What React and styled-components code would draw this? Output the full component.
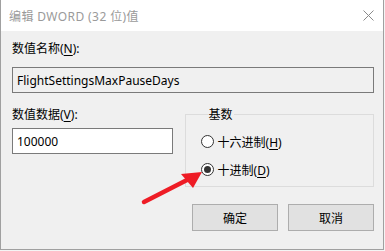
import React from "react";
import styled, { createGlobalStyle } from "styled-components";

const Global = createGlobalStyle`
  html, body { margin: 0; padding: 0; background: #f4f4f4; }
  body { width: 385px; height: 251px; overflow: hidden; }
  * { box-sizing: border-box; }
`;

const FONT = `"Noto Sans", "Noto Sans CJK SC", sans-serif`;

const Window = styled.div`
  position: relative;
  width: 384px;
  height: 250px;
  border: 1px solid #a0a0a0;
  border-top: none;
  background: #f0f0f0;
  display: flex;
  flex-direction: column;
  font-family: ${FONT};
  font-size: 12px;
  color: #000;
`;

const TitleBar = styled.div`
  height: 31px;
  background: #fff;
  display: flex;
  align-items: center;
  justify-content: space-between;
  padding: 0 9px 0 8px;
  color: #9a9a9a;
  font-size: 12px;
  letter-spacing: 0.4px;
`;

const Close = styled.svg`
  width: 11px;
  height: 11px;
`;

const Body = styled.div`
  flex: 1;
  padding: 9px 9px 0 11px;
  display: flex;
  flex-direction: column;
`;

const Label = styled.div`
  height: 17px;
  line-height: 17px;
  white-space: nowrap;
`;

const U = styled.span`
  text-decoration: underline;
  text-underline-offset: 2px;
`;

const Field = styled.div`
  height: 26px;
  border: 1px solid #7a7a7a;
  background: ${(p) => (p.$readOnly ? "#f0f0f0" : "#fff")};
  display: flex;
  align-items: center;
  padding-left: 4px;
  margin-top: ${(p) => p.$mt || 0}px;
`;

const Lower = styled.div`
  display: flex;
  gap: 12px;
  margin-top: 13px;
`;

const LeftCol = styled.div`
  display: flex;
  flex-direction: column;
  width: 161px;
`;

const Group = styled.fieldset`
  margin: 0;
  width: 190px;
  height: 81px;
  border: 1px solid #dcdcdc;
  padding: 10px 0 0 15px;
  display: flex;
  flex-direction: column;
  gap: 11px;
`;

const Legend = styled.legend`
  padding: 0 1px;
  margin-left: 7px;
  line-height: 17px;
`;

const RadioRow = styled.div`
  display: flex;
  align-items: center;
  gap: 4px;
  height: 17px;
`;

const RadioDot = styled.span`
  width: 13px;
  height: 13px;
  border-radius: 50%;
  border: 1px solid #333;
  background: #fff;
  display: flex;
  align-items: center;
  justify-content: center;
  &::after {
    content: "";
    width: 7px;
    height: 7px;
    border-radius: 50%;
    background: ${(p) => (p.$checked ? "#333" : "transparent")};
  }
`;

const Buttons = styled.div`
  display: flex;
  justify-content: flex-end;
  gap: 10px;
  margin-top: 17px;
`;

const Button = styled.div`
  width: 86px;
  height: 27px;
  background: #e1e1e1;
  border: 1px solid #adadad;
  display: flex;
  align-items: center;
  justify-content: center;
`;

const Arrow = styled.svg`
  position: absolute;
  left: 0;
  top: 0;
  width: 384px;
  height: 250px;
  pointer-events: none;
`;

export default function App() {
  return (
    <>
      <Global />
      <Window>
        <TitleBar>
          <span>编辑 DWORD (32 位)值</span>
          <Close viewBox="0 0 11 11">
            <path d="M0.5 0.5 L10.5 10.5 M10.5 0.5 L0.5 10.5" stroke="#8a8a8a" strokeWidth="1" fill="none" />
          </Close>
        </TitleBar>
        <Body>
          <Label>
            数值名称(<U>N</U>):
          </Label>
          <Field $readOnly $mt={10}>FlightSettingsMaxPauseDays</Field>
          <Lower>
            <LeftCol>
              <Label>
                数值数据(<U>V</U>):
              </Label>
              <Field $mt={5}>100000</Field>
            </LeftCol>
            <Group>
              <Legend>基数</Legend>
              <RadioRow>
                <RadioDot />
                <span>
                  十六进制(<U>H</U>)
                </span>
              </RadioRow>
              <RadioRow>
                <RadioDot $checked />
                <span>
                  十进制(<U>D</U>)
                </span>
              </RadioRow>
            </Group>
          </Lower>
          <Buttons>
            <Button>确定</Button>
            <Button>取消</Button>
          </Buttons>
        </Body>
        <Arrow viewBox="0 0 384 250">
          <line x1="143" y1="202" x2="186" y2="180" stroke="#ee1c25" strokeWidth="4.5" strokeLinecap="round" />
          <polygon points="180,174 201,172 192,188" fill="#ee1c25" />
        </Arrow>
      </Window>
    </>
  );
}
